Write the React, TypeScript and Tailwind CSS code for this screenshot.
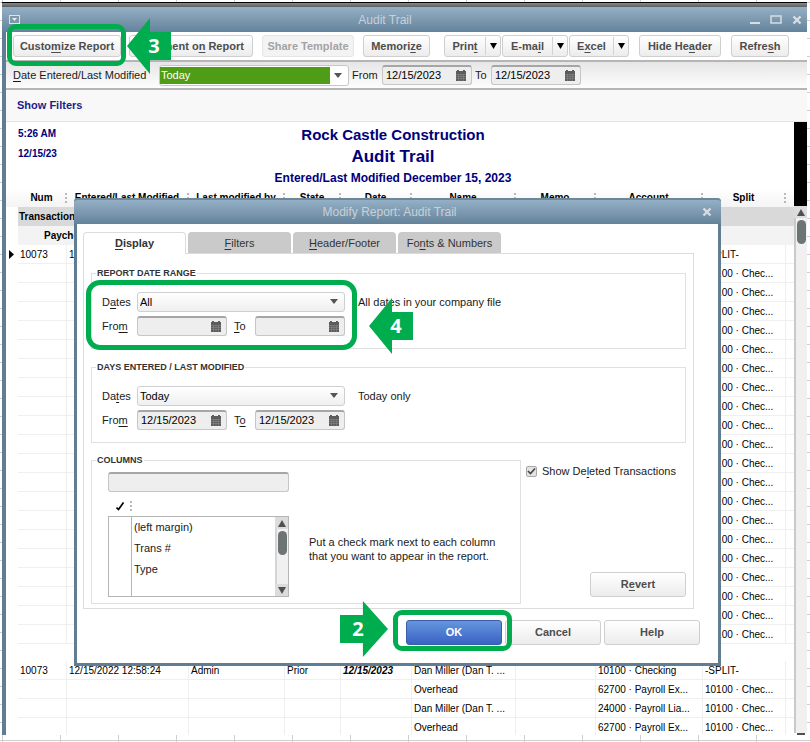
import React from 'react';

type ReportRow = {
  kind?: 'gap';
  num?: string;
  modified?: string;
  by?: string;
  state?: string;
  date?: string;
  name?: string;
  account?: string;
  split?: string;
};

const PAYROLL_LINES = 20;

const reportRows: ReportRow[] = [
  { num: '10073', modified: '12/15/2023 12:58:24', split: '-SPLIT-' },
  ...Array.from({ length: PAYROLL_LINES }, () => ({ split: '10100 · Chec...' })),
  { kind: 'gap' },
  {
    num: '10073',
    modified: '12/15/2022 12:58:24',
    by: 'Admin',
    state: 'Prior',
    date: '12/15/2023',
    name: 'Dan Miller (Dan T. ...',
    account: '10100 · Checking',
    split: '-SPLIT-',
  },
  { name: 'Overhead', account: '62700 · Payroll Ex...', split: '10100 · Chec...' },
  { name: 'Dan Miller (Dan T. ...', account: '24000 · Payroll Lia...', split: '10100 · Chec...' },
  { name: 'Overhead', account: '62700 · Payroll Ex...', split: '10100 · Chec...' },
];

const headings = ['Num', 'Entered/Last Modified', 'Last modified by', 'State', 'Date', 'Name', 'Memo', 'Account', 'Split'];

const buttonLook =
  'rounded-[3px] border border-[#cfcfcf] bg-linear-to-b from-white to-[#ececec] font-bold text-[#4d4d4d] whitespace-nowrap';

// Text with one underlined access key
const Keyed: React.FC<{ text: string; at: number }> = ({ text, at }) => (
  <>
    {text.slice(0, at)}
    <span className="underline underline-offset-2">{text[at]}</span>
    {text.slice(at + 1)}
  </>
);

const CalendarIcon: React.FC = () => (
  <svg width="12" height="12" viewBox="0 0 12 12" aria-hidden="true">
    <path d="M1 1h1V0h2v1h4V0h2v1h1v10H1z" fill="#5c5c5c" />
    <path d="M1 4.500h10M1 6.500h10M1 8.500h10M3.500 4v7M6 4v7M8.500 4v7" stroke="#8f8f8f" strokeWidth="0.500" />
  </svg>
);

const DownArrow: React.FC<{ className?: string }> = ({ className }) => (
  <svg width="8" height="5" viewBox="0 0 8 5" className={className} aria-hidden="true">
    <path d="M0 0h8L4 5z" fill="currentColor" />
  </svg>
);

const DateField: React.FC<{ id: string; value?: string }> = ({ id, value = '' }) => (
  <div className="flex h-5 w-[90px] items-center rounded-[3px] border border-[#c6c6c6] border-t-2 border-t-[#a6a6a6] bg-[#eeeeee] pr-1">
    <input id={id} defaultValue={value} className="w-full min-w-0 bg-transparent pl-[3px] text-black outline-none" />
    <button type="button" aria-label="Pick a date" className="shrink-0">
      <CalendarIcon />
    </button>
  </div>
);

const DropDown: React.FC<{ id: string; value: string; options: string[] }> = ({ id, value, options }) => (
  <div className="relative h-5 w-[208px]">
    <select
      id={id}
      defaultValue={value}
      className="h-full w-full appearance-none rounded-[3px] border border-[#cfcfcf] bg-linear-to-b from-white to-[#efefef] pl-[2px] text-black outline-none"
    >
      {options.map((option) => (
        <option key={option}>{option}</option>
      ))}
    </select>
    <DownArrow className="pointer-events-none absolute top-[7px] right-[7px] text-[#555]" />
  </div>
);

const ToolButton: React.FC<{ text: string; at: number; className: string; disabled?: boolean }> = ({
  text,
  at,
  className,
  disabled,
}) => (
  <button type="button" disabled={disabled} className={`${buttonLook} h-[22px] disabled:border-[#e6e6e6] disabled:bg-none disabled:bg-[#f3f3f3] disabled:text-[#a3a3a3] ${className}`}>
    {at < 0 ? text : <Keyed text={text} at={at} />}
  </button>
);

const SplitButton: React.FC<{ text: string; at: number; className: string }> = ({ text, at, className }) => (
  <div className={`${buttonLook} flex h-[22px] ${className}`}>
    <button type="button" className="flex-1">
      <Keyed text={text} at={at} />
    </button>
    <button type="button" aria-label={`${text} options`} className="my-px flex w-[15px] items-center justify-center border-l border-[#d2d2d2] text-black">
      <svg width="7" height="6" viewBox="0 0 7 6" aria-hidden="true">
        <path d="M0 0h7L3.500 6z" fill="currentColor" />
      </svg>
    </button>
  </div>
);

const CloseIcon: React.FC = () => (
  <svg width="10" height="10" viewBox="0 0 10 10" aria-hidden="true">
    <path d="M1.500 1.500l7 7M8.500 1.500l-7 7" stroke="#d9dde0" strokeWidth="2.400" />
  </svg>
);

const ScrollArrow: React.FC<{ down?: boolean }> = ({ down }) => (
  <button type="button" aria-label={down ? 'Scroll down' : 'Scroll up'} className="flex h-3 w-full shrink-0 items-center justify-center bg-[#dcdcdc]">
    <svg width="8" height="7" viewBox="0 0 8 7" aria-hidden="true">
      <path d={down ? 'M0 0h8L4 7z' : 'M0 7h8L4 0z'} fill="#505050" />
    </svg>
  </button>
);

const TitleBar: React.FC = () => (
  <div className="border-t border-black">
    <div className="h-1 bg-linear-to-b from-[#8a8a8a] to-[#5b6063]" />
    <div className="flex h-[25px] items-center bg-linear-to-b from-[#95b0c6] to-[#64839a] pr-[5px] pl-[7px]">
      <button type="button" aria-label="Window menu">
        <svg width="11" height="9" viewBox="0 0 11 9" aria-hidden="true">
          <rect x="0.500" y="0.500" width="10" height="8" fill="#7f97a8" stroke="#dfe3e6" />
          <path d="M3 3h5L5.500 6z" fill="#e8ebed" />
        </svg>
      </button>
      <h1 className="flex-1 text-center text-[12px] text-[#c9d1d8]">Audit Trail</h1>
      <div className="flex items-center gap-[10px]">
        <button type="button" aria-label="Minimize">
          <svg width="10" height="9" viewBox="0 0 10 9" aria-hidden="true">
            <path d="M0 8h10" stroke="#d9dde0" strokeWidth="2" />
          </svg>
        </button>
        <button type="button" aria-label="Maximize">
          <svg width="12" height="9" viewBox="0 0 12 9" aria-hidden="true">
            <path d="M1 1h10v7H1z" fill="none" stroke="#d9dde0" strokeWidth="1.500" />
          </svg>
        </button>
        <button type="button" aria-label="Close">
          <CloseIcon />
        </button>
      </div>
    </div>
  </div>
);

const Toolbar: React.FC = () => (
  <div className="flex h-7 items-center bg-white pl-[7px]">
    <ToolButton text="Customize Report" at={5} className="w-[108px]" />
    <ToolButton text="Comment on Report" at={9} className="ml-2 w-[124px]" />
    <ToolButton text="Share Template" at={-1} className="ml-[9px] w-[92px]" disabled />
    <ToolButton text="Memorize" at={6} className="ml-[9px] w-[67px]" />
    <SplitButton text="Print" at={4} className="ml-[14px] w-[57px]" />
    <SplitButton text="E-mail" at={4} className="ml-px w-[66px]" />
    <SplitButton text="Excel" at={1} className="ml-px w-[60px]" />
    <ToolButton text="Hide Header" at={7} className="ml-[10px] w-[82px]" />
    <ToolButton text="Refresh" at={5} className="ml-[10px] w-[58px]" />
  </div>
);

const FilterBar: React.FC = () => (
  <div className="flex h-[30px] items-center border-y-2 border-[#b5b5b5] bg-linear-to-b from-[#e6e6e6] to-[#fdfdfd] pl-[7px]">
    <label htmlFor="entered" className="w-[146px] whitespace-nowrap">
      <Keyed text="Date Entered/Last Modified" at={0} />
    </label>
    <div className="relative h-[21px] w-[190px] rounded-[3px] border border-[#c6c6c6] bg-white">
      <select id="entered" defaultValue="Today" className="mt-px block h-[17px] w-[170px] appearance-none bg-[#4f9d17] px-px text-white outline-none">
        <option>Today</option>
        <option>All</option>
      </select>
      <DownArrow className="pointer-events-none absolute top-[7px] right-[6px] text-[#555]" />
    </div>
    <label htmlFor="bar-from" className="ml-[3px] w-[30px]">From</label>
    <DateField id="bar-from" value="12/15/2023" />
    <label htmlFor="bar-to" className="ml-[3px] w-4">To</label>
    <DateField id="bar-to" value="12/15/2023" />
  </div>
);

const ReportTable: React.FC = () => (
  <table className="w-full table-fixed border-separate border-spacing-0 text-[10px] text-black">
    <colgroup>
      <col className="w-3" />
      <col className="w-[49px]" />
      <col className="w-[122px]" />
      <col className="w-24" />
      <col className="w-14" />
      <col className="w-[71px]" />
      <col />
      <col className="w-[80px]" />
      <col className="w-[107px]" />
      <col className="w-[83px]" />
      <col className="w-2" />
    </colgroup>
    <thead>
      <tr className="h-[19px] bg-linear-to-b from-white to-[#f4f4f4]">
        <td />
        {headings.map((heading) => (
          <th key={heading} scope="col" className="p-0 whitespace-nowrap">
            <div className="flex items-center">
              <span className="flex-1 text-center">{heading}</span>
              <span className="h-[10px] border-r-2 border-dotted border-[#b9b9b9]" />
            </div>
          </th>
        ))}
        <td />
      </tr>
    </thead>
    <tbody>
      <tr className="h-[19px] font-bold">
        <td className="p-0" />
        <td colSpan={10} className="bg-[#d9d9d9] p-0 pl-px">Transactions entered or modified by Admin</td>
      </tr>
      <tr className="h-[19px] font-bold">
        <td className="p-0" />
        <td colSpan={10} className="bg-[#f3f3f3] p-0 pl-[26px]">Paycheck</td>
      </tr>
      {reportRows.map((row, index) =>
        row.kind === 'gap' ? (
          <tr key={index} className="h-[17px]">
            <td colSpan={11} className="p-0" />
          </tr>
        ) : (
          <tr key={index} className="h-[19px] [&>td+td]:border-r [&>td+td]:border-b [&>td+td]:border-[#efefef]">
            <td className="p-0 pl-[3px]">
              {index === 0 && (
                <svg width="5" height="9" viewBox="0 0 5 9" aria-hidden="true">
                  <path d="M0 0v9l5-4.500z" />
                </svg>
              )}
            </td>
            {[row.num, row.modified, row.by, row.state, row.date, row.name, '', row.account, row.split, ''].map((text, cell) => (
              <td key={cell} className={`overflow-hidden p-0 pl-[2px] whitespace-nowrap first-of-type:pl-[3px] ${cell === 4 ? 'font-bold italic' : ''} ${cell === 9 ? 'border-r-0!' : ''}`}>
                {text}
              </td>
            ))}
          </tr>
        ),
      )}
    </tbody>
  </table>
);

const Report: React.FC = () => (
  <div className="flex min-h-0 flex-1 bg-white">
    <div className="min-w-0 flex-1 overflow-hidden">
      <div className="grid h-[66px] grid-cols-[120px_1fr_120px] pr-[26px] pl-3 font-bold text-[#00007b]">
        <div className="pt-[2px] text-[10px] leading-5">
          <p>5:26 AM</p>
          <p>12/15/23</p>
        </div>
        <div className="pt-[3px] text-center whitespace-nowrap">
          <h2 className="text-[15px] leading-5">Rock Castle Construction</h2>
          <p className="text-[17px] leading-6">Audit Trail</p>
          <p className="text-[12px] leading-[18px]">Entered/Last Modified December 15, 2023</p>
        </div>
      </div>
      <ReportTable />
    </div>
    <div className="flex w-[13px] flex-col">
      <div className="h-[84px] shrink-0 bg-black" />
      <ScrollArrow />
      <div className="flex-1 border-l-2 border-[#c9c9c9] bg-[#f0f0f0] pt-[2px]">
        <div className="mx-px h-6 rounded-full bg-[#6c7474]" />
      </div>
      <div className="mx-auto h-[2px] w-2 bg-[#505050]" />
    </div>
  </div>
);

type RangeProps = {
  id: string;
  title: string;
  value: string;
  date?: string;
  note: string;
  datesKey: number;
  toKey: number;
};

const RangeGroup: React.FC<RangeProps> = ({ id, title, value, date, note, datesKey, toKey }) => (
  <fieldset className="h-[82px] border border-[#e0e0e0] pl-[10px]">
    <legend className="-ml-[6px] px-[1px] text-[9px] leading-3 font-bold text-[#333]">{title}</legend>
    <div className="mt-[13px] flex items-center">
      <label htmlFor={`${id}-dates`} className="w-[35px]">
        <Keyed text="Dates" at={datesKey} />
      </label>
      <DropDown id={`${id}-dates`} value={value} options={['All', 'Today']} />
      <span className="ml-[13px]">{note}</span>
    </div>
    <div className="mt-1 flex items-center">
      <label htmlFor={`${id}-from`} className="w-[35px]">
        <Keyed text="From" at={3} />
      </label>
      <DateField id={`${id}-from`} value={date} />
      <label htmlFor={`${id}-to`} className="w-7 pl-[7px]">
        <Keyed text="To" at={toKey} />
      </label>
      <DateField id={`${id}-to`} value={date} />
    </div>
  </fieldset>
);

const ColumnsGroup: React.FC = () => (
  <fieldset className="h-[150px] w-[430px] border border-[#e0e0e0] pl-4">
    <legend className="-ml-3 px-[1px] text-[9px] leading-3 font-bold text-[#333]">COLUMNS</legend>
    <input
      aria-label="Search columns"
      className="mt-[6px] block h-5 w-[181px] rounded-[3px] border border-[#c6c6c6] border-t-2 border-t-[#a6a6a6] bg-[#eeeeee] px-1 outline-none"
    />
    <div className="flex gap-5">
      <div className="w-[181px]">
        <div className="flex h-6 items-center pt-1 pl-2">
          <svg width="8" height="9" viewBox="0 0 8 9" aria-hidden="true">
            <path d="M0.500 5.500L2.500 7.500L7.500 0.500" fill="none" stroke="#000" strokeWidth="1.700" />
          </svg>
          <span className="ml-[6px] h-[10px] border-r-2 border-dotted border-[#b9b9b9]" />
        </div>
        <div className="flex h-[81px] border border-[#b5b5b5] bg-white">
          <ul className="flex-1">
            {['(left margin)', 'Trans #', 'Type', ''].map((column) => (
              <li key={column} className="flex h-[21px] last:h-4">
                <span className="w-[23px] border-r border-[#b5b5b5]" />
                <span className="pl-[2px] leading-[21px]">{column}</span>
              </li>
            ))}
          </ul>
          <div className="flex w-[13px] flex-col bg-[#f0f0f0]">
            <ScrollArrow />
            <div className="flex-1 border-l-2 border-[#d5d5d5] pt-[2px]">
              <div className="mx-px h-6 rounded-full bg-[#6c7474]" />
            </div>
            <ScrollArrow down />
          </div>
        </div>
      </div>
      <p className="mt-[43px] leading-[14px] whitespace-nowrap">
        Put a check mark next to each column
        <br />
        that you want to appear in the report.
      </p>
    </div>
  </fieldset>
);

const tabs = [
  { text: 'Display', at: 0 },
  { text: 'Filters', at: 0 },
  { text: 'Header/Footer', at: 0 },
  { text: 'Fonts & Numbers', at: 2 },
];

const ModifyReportDialog: React.FC = () => (
  <div role="dialog" aria-label="Modify Report: Audit Trail" className="absolute top-[196px] left-[72px] w-[647px] rounded-t-[4px] border-[3px] border-t-0 border-[#607d93] bg-white">
    <div className="-mx-[3px] flex h-[26px] items-center rounded-t-[4px] border-t-2 border-[#6d8799] bg-linear-to-b from-[#95b0c6] to-[#64839a] pr-[9px] pl-[3px]">
      <h2 className="flex-1 text-center text-[12px] text-[#c9d1d8]">Modify Report: Audit Trail</h2>
      <button type="button" aria-label="Close dialog">
        <CloseIcon />
      </button>
    </div>
    <div className="pr-6 pl-[6px]">
      <div role="tablist" className="flex gap-[2px] pt-2">
        {tabs.map((tab, index) => (
          <button
            key={tab.text}
            type="button"
            role="tab"
            aria-selected={index === 0}
            className="h-[21px] w-[103px] rounded-t-[4px] border border-b-0 border-[#c9c9c9] bg-[#cacaca] text-[#333] aria-selected:relative aria-selected:z-10 aria-selected:-mb-px aria-selected:h-[22px] aria-selected:border-[#dcdcdc] aria-selected:bg-white aria-selected:font-bold"
          >
            <Keyed text={tab.text} at={tab.at} />
          </button>
        ))}
      </div>
      <div role="tabpanel" className="h-[356px] border border-[#dcdcdc] px-[7px] pt-[13px]">
        <RangeGroup id="range" title="REPORT DATE RANGE" value="All" note="All dates in your company file" datesKey={1} toKey={0} />
        <div className="mt-3">
          <RangeGroup id="entered" title="DAYS ENTERED / LAST MODIFIED" value="Today" date="12/15/2023" note="Today only" datesKey={2} toKey={1} />
        </div>
        <div className="mt-[11px] flex justify-between">
          <ColumnsGroup />
          <div className="flex w-[160px] flex-col justify-between pt-[9px] pb-[7px]">
            <label className="flex items-center gap-[6px] whitespace-nowrap">
              <input
                type="checkbox"
                defaultChecked
                className="peer h-[11px] w-[11px] shrink-0 appearance-none rounded-[2px] border border-[#a8a8a8] bg-[#e3e3e3]"
              />
              <svg width="9" height="8" viewBox="0 0 9 8" className="-ml-4 hidden peer-checked:block" aria-hidden="true">
                <path d="M1 4L3.500 6.500L8 1.500" fill="none" stroke="#444" strokeWidth="1.600" />
              </svg>
              <span>
                <Keyed text="Show Deleted Transactions" at={7} />
              </span>
            </label>
            <button type="button" className={`${buttonLook} h-[25px] w-24 self-end`}>
              <Keyed text="Revert" at={1} />
            </button>
          </div>
        </div>
      </div>
    </div>
    <div className="flex h-[54px] items-start justify-end gap-[3px] pt-[11px] pr-[18px]">
      <button type="button" className="h-[25px] w-24 rounded-[3px] border border-[#3c5ea8] bg-linear-to-b from-[#6596dc] to-[#3b62c4] font-bold text-white">
        OK
      </button>
      <button type="button" className={`${buttonLook} h-[25px] w-24`}>Cancel</button>
      <button type="button" className={`${buttonLook} h-[25px] w-24`}>Help</button>
    </div>
  </div>
);

// Callout arrow with its step number
const StepArrow: React.FC<{ step: number; right?: boolean; className: string }> = ({ step, right, className }) => (
  <div className={`absolute ${className}`}>
    <svg viewBox="0 0 44 56" preserveAspectRatio="none" className={`block h-[56px] w-full ${right ? '-scale-x-100' : ''}`} aria-hidden="true">
      <path d="M0 28L23 0V14H44V42H23V56z" fill="#00ad4e" />
    </svg>
    <span className={`absolute inset-0 flex items-center justify-center font-['Open_Sans',sans-serif] text-[20px] font-bold text-white ${right ? 'pr-3' : 'pl-[10px]'}`}>
      {step}
    </span>
  </div>
);

const App: React.FC = () => {
  return (
    <main className="flex h-screen flex-col overflow-hidden bg-white bg-[linear-gradient(to_right,#cfcfcf_1px,transparent_1px),linear-gradient(to_bottom,#cfcfcf_1px,transparent_1px)] bg-[size:58px_18px] bg-[position:2px_2px] pt-[2px] pr-[3px] pb-[7px] pl-[2px] font-['Liberation_Sans',Arial,sans-serif] text-[11px] text-[#1a1a1a]">
      <div className="relative flex min-h-0 flex-1 flex-col">
        <TitleBar />
        <div className="flex min-h-0 flex-1 flex-col border-l-4 border-[#607d93]">
          <Toolbar />
          <FilterBar />
          <div className="flex h-8 shrink-0 items-center border-b border-[#e4e4e4] bg-[#f8f8f8] pl-[11px]">
            <button type="button" className="font-bold text-[#1c1c8c]">Show Filters</button>
          </div>
          <Report />
        </div>
        <ModifyReportDialog />

        <div className="pointer-events-none absolute top-[22px] left-[5px] h-[42px] w-[119px] rounded-[9px] border-[5px] border-[#00ad4e]" />
        <StepArrow step={3} className="top-[16px] left-[125px] w-11" />
        <div className="pointer-events-none absolute top-[278px] left-[84px] h-[70px] w-[271px] rounded-[14px] border-[5px] border-[#00ad4e]" />
        <StepArrow step={4} className="top-[296px] left-[367px] w-11" />
        <div className="pointer-events-none absolute top-[608px] left-[391px] h-[41px] w-[119px] rounded-[9px] border-[5px] border-[#00ad4e]" />
        <StepArrow step={2} right className="top-[599px] left-[338px] w-12" />
      </div>
    </main>
  );
};

export default App;
